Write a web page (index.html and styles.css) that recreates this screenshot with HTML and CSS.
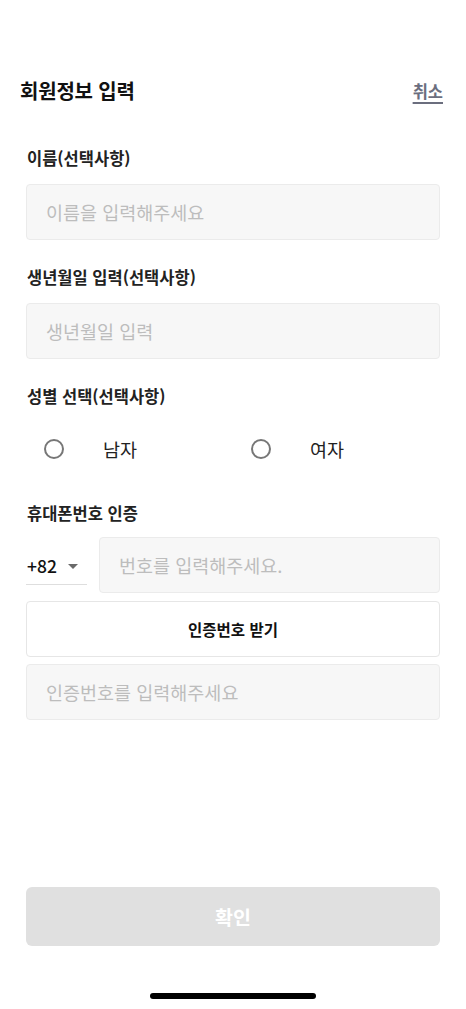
FILE: index.html
```html
<!DOCTYPE html>
<html lang="ko">
<head>
<meta charset="utf-8">
<meta name="viewport" content="width=device-width, initial-scale=1">
<title>회원정보 입력</title>
<link rel="stylesheet" href="styles.css">
</head>
<body>
<div class="screen">
  <header class="header">
    <h1 class="title">회원정보 입력</h1>
    <a class="cancel" href="#">취소</a>
  </header>
  <main class="form">
    <section class="field">
      <label class="label">이름(선택사항)</label>
      <input class="input" type="text" placeholder="이름을 입력해주세요">
    </section>
    <section class="field">
      <label class="label">생년월일 입력(선택사항)</label>
      <input class="input" type="text" placeholder="생년월일 입력">
    </section>
    <section class="field">
      <label class="label">성별 선택(선택사항)</label>
      <div class="radios">
        <div class="radio-option"><span class="radio"></span><span class="radio-text">남자</span></div>
        <div class="radio-option"><span class="radio"></span><span class="radio-text">여자</span></div>
      </div>
    </section>
    <section class="field phone-field">
      <label class="label">휴대폰번호 인증</label>
      <div class="phone-row">
        <div class="country">
          <span class="country-code">+82</span>
          <svg class="caret" width="10" height="5" viewBox="0 0 10 5"><path d="M0 0 L10 0 L5 5 Z" fill="#6a6a6a"/></svg>
        </div>
        <input class="input phone-input" type="text" placeholder="번호를 입력해주세요.">
      </div>
      <button class="btn-outline" type="button">인증번호 받기</button>
      <input class="input code-input" type="text" placeholder="인증번호를 입력해주세요">
    </section>
  </main>
  <footer class="footer">
    <button class="btn-confirm" type="button">확인</button>
    <div class="home-indicator"></div>
  </footer>
</div>
</body>
</html>
```
FILE: styles.css
```css
* { box-sizing: border-box; }
html, body { margin: 0; padding: 0; background: #fff; }
body {
  font-family: "Noto Sans CJK KR", "Noto Sans", sans-serif;
  color: #1e1e1e;
}
.screen {
  min-height: 1009px;
  display: flex;
  flex-direction: column;
}
.header {
  display: flex;
  justify-content: space-between;
  align-items: center;
  padding: 80px 23px 0 20px;
  height: 102px;
}
.title {
  margin: 0;
  font-size: 20px;
  font-weight: 700;
  line-height: 22px;
  letter-spacing: -0.2px;
  color: #111;
}
.cancel {
  font-size: 16.5px;
  font-weight: 700;
  line-height: 22px;
  color: #6b6e7e;
  text-decoration: underline;
  text-underline-offset: 4px;
  text-decoration-thickness: 1.5px;
}
.form {
  flex: 1;
  padding: 45px 26px 0 26px;
  display: flex;
  flex-direction: column;
}
.field {
  display: flex;
  flex-direction: column;
  margin-bottom: 26px;
}
.label {
  font-size: 16.5px;
  font-weight: 700;
  line-height: 22px;
  color: #222;
  padding-left: 1px;
  margin-bottom: 15px;
}
.input {
  height: 56px;
  width: 100%;
  border: 1px solid #ebebeb;
  background: #f7f7f7;
  border-radius: 4px;
  padding: 0 19px;
  font-family: "Noto Sans CJK KR", "Noto Sans", sans-serif;
  font-size: 18.5px;
  color: #222;
  outline: none;
}
.input::placeholder { color: #bdbdbd; }
.radios {
  display: grid;
  grid-template-columns: 1fr 1fr;
  height: 40px;
  margin-top: 7px;
  margin-bottom: 7px;
}
.radio-option {
  display: flex;
  align-items: center;
  padding-left: 18px;
  gap: 39px;
}
.radio {
  width: 20px;
  height: 20px;
  border: 2px solid #777;
  border-radius: 50%;
  flex: none;
}
.radio-text {
  font-size: 18.5px;
  line-height: 22px;
  color: #222;
}
.phone-field .label { margin-bottom: 13px; }
.phone-row {
  display: flex;
  gap: 12px;
  height: 56px;
}
.country {
  width: 61px;
  flex: none;
  display: flex;
  align-items: center;
  gap: 11px;
  padding-left: 1px;
  border-bottom: 1px solid #dedede;
  height: 48px;
  padding-top: 10px;
}
.country-code {
  font-size: 17.5px;
  font-weight: 500;
  color: #111;
  line-height: 22px;
}
.caret { margin-top: 1px; }
.phone-input { flex: 1; width: auto; }
.btn-outline {
  margin-top: 8px;
  height: 56px;
  width: 100%;
  background: #fff;
  border: 1px solid #e6e6e6;
  border-radius: 4px;
  font-family: "Noto Sans CJK KR", "Noto Sans", sans-serif;
  font-size: 15.5px;
  font-weight: 700;
  color: #111;
}
.code-input { margin-top: 7px; }
.footer {
  padding: 0 26px 10px 26px;
  display: flex;
  flex-direction: column;
  align-items: center;
}
.btn-confirm {
  width: 100%;
  height: 59px;
  background: #e0e0e0;
  border: none;
  border-radius: 6px;
  font-family: "Noto Sans CJK KR", "Noto Sans", sans-serif;
  font-size: 19.5px;
  font-weight: 700;
  color: #fff;
}
.home-indicator {
  margin-top: 47px;
  width: 166px;
  height: 6px;
  border-radius: 3px;
  background: #000;
}
```
